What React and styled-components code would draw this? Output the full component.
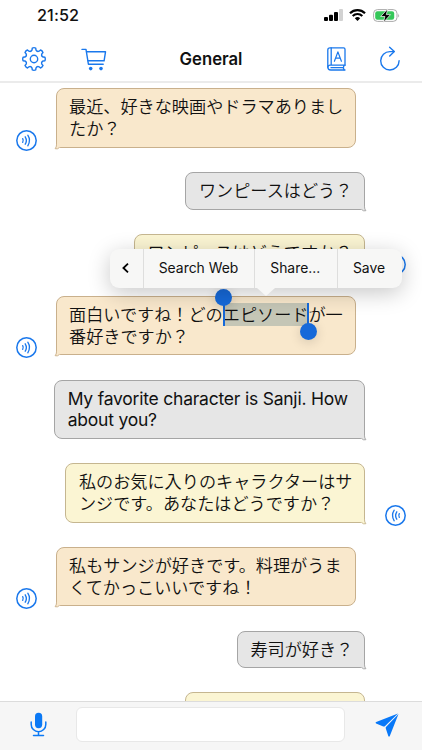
import React from "react";
import styled, { createGlobalStyle, css } from "styled-components";

const BLUE = "#1a78ec";

const GlobalStyle = createGlobalStyle`
  * { box-sizing: border-box; }
  body { margin: 0; background: #fff; font-family: Inter, "Noto Sans CJK JP", sans-serif; color: #111; }
  svg { display: block; overflow: visible; flex: none; }
`;

const Screen = styled.main`
  width: 422px;
  height: 750px;
  overflow: hidden;
  display: flex;
  flex-direction: column;
  background: #fff;
`;

const StatusBar = styled.div`
  height: 34px;
  flex: none;
  display: flex;
  align-items: flex-end;
  justify-content: space-between;
  padding: 0 22.5px 7px 37px;
`;

const Clock = styled.time`
  font-size: 16.2px;
  line-height: 22px;
  padding-bottom: 1px;
  font-weight: 550;
  letter-spacing: 0.1px;
`;

const StatusIcons = styled.div`
  display: flex;
  align-items: center;
  gap: 6.5px;
  height: 24px;
`;

const NavBar = styled.header`
  height: 49px;
  flex: none;
  display: grid;
  grid-template-columns: 1fr auto 1fr;
  align-items: center;
  padding: 2px 22px 0 22px;
  border-bottom: 2px solid #ebebeb;
`;

const NavGroup = styled.div`
  display: flex;
  align-items: center;
  gap: ${(p) => p.$gap}px;
  justify-content: ${(p) => (p.$end ? "flex-end" : "flex-start")};
`;

const Title = styled.h1`
  margin: 0;
  padding-top: 1px;
  font-size: 16.7px;
  line-height: 22px;
  font-weight: 560;
`;

const Chat = styled.section`
  flex: 1;
  min-height: 0;
  overflow: hidden;
  display: flex;
  flex-direction: column;
  gap: 24.2px;
  padding: 5.4px 16px 0;
`;

const Row = styled.div`
  flex: none;
  display: flex;
  align-items: flex-end;
  flex-direction: ${(p) => (p.$mine ? "row-reverse" : "row")};
  gap: ${(p) => (p.$mine ? 20 : 19)}px;
`;

const IconSlot = styled.div`
  width: 21px;
  height: 18px;
  flex: none;
  svg { ${(p) => p.$mine && css`transform: scaleX(-1);`} }
`;

const tones = {
  peach: ["#f9e8cc", "#c9b08c"],
  gray: ["#e6e6e6", "#a5a5a5"],
  lemon: ["#fbf5d3", "#c5b690"],
};

const Bubble = styled.div`
  position: relative;
  flex: none;
  width: ${(p) => p.$width}px;
  height: ${(p) => (p.$lines > 1 ? 59.5 : 37.7)}px;
  padding: ${(p) => (p.$latin ? 7 : 6)}px 0 0 ${(p) => (p.$mine ? 12.7 : 12)}px;
  border: 1px solid ${(p) => tones[p.$tone][1]};
  border-radius: 8px;
  ${(p) => (p.$mine ? "border-bottom-right-radius: 3px;" : "border-bottom-left-radius: 3px;")}
  background: ${(p) => tones[p.$tone][0]};
`;

const Line = styled.div`
  height: 21.8px;
  line-height: 21.8px;
  white-space: nowrap;
  font-weight: ${(p) => (p.$latin ? 400 : 350)};
  font-family: ${(p) => (p.$latin ? "Inter, sans-serif" : '"Noto Sans CJK JP", sans-serif')};
  font-size: ${(p) => (p.$latin ? 17.5 : 17.15)}px;
  letter-spacing: ${(p) => (p.$latin ? "-0.22px" : "0")};
`;

const Tail = styled.svg`
  position: absolute;
  bottom: -3px;
  ${(p) => (p.$mine ? "right: -2px;" : "left: -2px; transform: scaleX(-1);")}
`;

const Selected = styled.span`
  position: relative;
  z-index: 3;
  display: inline-block;
  height: 23px;
  line-height: 21.8px;
  vertical-align: top;
  background: rgba(96, 132, 140, 0.34);
`;

const Handle = styled.i`
  position: absolute;
  top: 0;
  width: 2px;
  height: 23px;
  background: #1669d9;
  ${(p) => (p.$start ? "left: 0;" : "right: -1px;")}
  &::after {
    content: "";
    position: absolute;
    left: -7.5px;
    ${(p) => (p.$start ? "top: -14px;" : "bottom: -14px;")}
    width: 17px;
    height: 17px;
    border-radius: 50%;
    background: #1669d9;
    box-shadow: 0 2px 12px rgba(0, 0, 0, 0.16);
  }
`;

const Menu = styled.div`
  position: absolute;
  z-index: 4;
  left: 109.5px;
  top: 248.5px;
  width: 292px;
  height: 39.5px;
  display: grid;
  grid-template-columns: 33.5px 111px 82.5px 1fr;
  border-radius: 9px;
  background: #f7f7f6;
  box-shadow: 0 5px 22px rgba(0, 0, 0, 0.22);
  &::after {
    content: "";
    position: absolute;
    left: 147.5px;
    top: 39px;
    border: 9px solid transparent;
    border-top: 8px solid #f7f7f6;
    border-bottom: 0;
  }
`;

const MenuItem = styled.button`
  display: flex;
  align-items: center;
  justify-content: center;
  padding: 0 1px 0 0;
  border: 0;
  border-left: ${(p) => (p.$first ? 0 : "1px solid #dededd")};
  background: none;
  color: #111;
  font: 400 13.9px/20px Inter, sans-serif;
`;

const Composer = styled.footer`
  height: 49px;
  flex: none;
  display: flex;
  align-items: flex-start;
  padding: 5px 23px 0 30px;
  border-top: 1px solid #dcdcdc;
  background: #f6f6f6;
`;

const Field = styled.input`
  width: 269px;
  height: 35px;
  margin-left: 29px;
  margin-right: auto;
  border: 1px solid #e8e8e8;
  border-radius: 6px;
  background: #fff;
  outline: 0;
`;

const MicSlot = styled.div`
  width: 17px;
  padding-top: 5px;
`;

const SendSlot = styled.div`
  padding-top: 6px;
`;

const Signal = () => (
  <svg width="19" height="12" viewBox="0 0 19 12">
    <rect x="0" y="8" width="4" height="4" rx="1" fill="#000" />
    <rect x="5" y="5.8" width="4" height="6.2" rx="1" fill="#000" />
    <rect x="10" y="3" width="4" height="9" rx="1" fill="#000" />
    <rect x="15" y="0" width="4" height="12" rx="1" fill="#d2d2d2" />
  </svg>
);

const Wifi = () => (
  <svg width="17" height="12" viewBox="0 0 17 12" fill="none" stroke="#000" strokeWidth="2.2">
    <path d="M1 4.2a10.7 10.7 0 0 1 15 0" />
    <path d="M3.7 7a6.8 6.8 0 0 1 9.6 0" />
    <path d="M8.5 12 5.8 9.3a3.9 3.9 0 0 1 5.4 0Z" fill="#000" stroke="none" />
  </svg>
);

const Battery = () => (
  <svg width="27" height="13" viewBox="0 0 27 13">
    <rect x=".6" y=".6" width="23.4" height="11.8" rx="3.8" fill="#fff" stroke="#aaa" strokeWidth="1" />
    <rect x="2.2" y="2.2" width="19" height="8.6" rx="2.2" fill="#35c759" />
    <path d="M25.2 4.5q1.7 2 0 4Z" fill="#aaa" />
    <path d="M14.8-.2 7.7 7.5h4.2l-1.5 5.9 7.1-7.8h-4.2Z" fill="#000" stroke="#fff" strokeWidth=".7" />
  </svg>
);

const gearPath = (() => {
  const parts = [];
  for (let i = 0; i < 8; i++) {
    const at = (deg, r) => {
      const a = ((i * 45 + deg - 90) * Math.PI) / 180;
      return `${(12 + r * Math.cos(a)).toFixed(2)} ${(12 + r * Math.sin(a)).toFixed(2)}`;
    };
    parts.push(`${i ? "L" : "M"}${at(-9, 11.1)}Q${at(0, 11.7)} ${at(9, 11.1)}L${at(12, 9.3)}Q${at(22.5, 7.6)} ${at(33, 9.3)}`);
  }
  return parts.join("") + "Z";
})();

const Gear = () => (
  <svg width="24" height="24" viewBox="0 0 24 24" fill="none" stroke={BLUE} strokeWidth="1.4" strokeLinejoin="round">
    <path d={gearPath} />
    <circle cx="12" cy="12" r="3.7" />
  </svg>
);

const Cart = () => (
  <svg width="26" height="24" viewBox="0 0 26 24" fill="none" stroke={BLUE} strokeWidth="1.4" strokeLinecap="round" strokeLinejoin="round">
    <path d="M1 2.4h4l2.4 14.8h14.8" />
    <path d="M5.6 4.8h18.9l-1.4 9H7" />
    <circle cx="9.7" cy="21.6" r="1.8" fill={BLUE} stroke="none" />
    <circle cx="20" cy="21.6" r="1.8" fill={BLUE} stroke="none" />
  </svg>
);

const Book = () => (
  <svg width="19" height="24" viewBox="0 0 19 24" fill="none" stroke={BLUE} strokeWidth="1.3" strokeLinejoin="round" strokeLinecap="round">
    <path d="M18 18.2V2.3Q18 .9 16.6.9H3Q.8.9.8 3v17q0 3 3 3H18" />
    <path d="M18 18.2H3.2q-2.3 0-2.3 2M4.2 1v17M17 18.4q-1.2 2.2 0 4.4M4 20.7h12" />
    <path d="m7.4 14.3 3.5-9.4 3.5 9.4M8.6 11.2h4.6" strokeWidth="1.2" />
  </svg>
);

const Refresh = () => (
  <svg width="20" height="24" viewBox="0 0 20 24" fill="none" stroke={BLUE} strokeWidth="1.4" strokeLinecap="round" strokeLinejoin="round">
    <path d="M19.1 13.8A9.2 9.2 0 1 1 10 4.6h4" />
    <path d="m9.6.2 4.7 4.4-4.6 4.5" />
  </svg>
);

const Speaker = () => (
  <svg width="21" height="21" viewBox="0 0 21 21" fill="none" stroke={BLUE} strokeWidth="1.3" strokeLinecap="round">
    <circle cx="10.5" cy="10.5" r="9.7" strokeWidth="1.5" />
    <path d="M6.7 8.6q1.1 1.9 0 3.8M9.2 6.8q2.3 3.7 0 7.4M11.8 5.2q3.4 5.3 0 10.6" />
  </svg>
);

const Mic = () => (
  <svg width="17" height="25" viewBox="0 0 17 25" fill="none" stroke="#0b79f5" strokeWidth="1.5" strokeLinecap="round">
    <rect x="5" y=".8" width="7.2" height="15.4" rx="3.6" fill="#0b79f5" stroke="none" />
    <path d="M1.2 10v2.4a7.3 7.3 0 0 0 14.6 0V10M8.5 19.7v3.8M3.5 23.5h10" />
  </svg>
);

const Send = () => (
  <svg width="24" height="24" viewBox="0 0 24 24" fill="#0878f8">
    <path d="M23 .6 1.2 9.1q-1.4.7-.1 1.5l7.2 2.8q1 .3 1.8-.5Z" />
    <path d="M23.5 1.1 11.2 13.8q-.8.8-.4 1.8l2.5 7.4q.7 1.5 1.5 0Z" />
  </svg>
);

const BubbleTail = ({ mine, tone }) => (
  <Tail $mine={mine} width="7" height="7" viewBox="0 0 7 7">
    <path d="M1.5 4V1H5.5q0 3 1.4 4.7-2.2 1-4.2-1Z" fill={tones[tone][0]} />
    <path d="M5.5 0v1.8q0 2.4 1.4 3.9-2.4.9-4.3-1.2" fill="none" stroke={tones[tone][1]} strokeWidth=".9" />
  </Tail>
);

const messages = [
  { tone: "peach", icon: true, lines: ["最近、好きな映画やドラマありまし", "たか？"] },
  { tone: "gray", mine: true, lines: ["ワンピースはどう？"] },
  { tone: "lemon", mine: true, icon: true, lines: ["ワンピースはどうですか？"] },
  { tone: "peach", icon: true, width: 300, lines: [["面白いですね！どの", "エピソード", "が一"], "番好きですか？"] },
  { tone: "gray", mine: true, latin: true, width: 311, lines: ["My favorite character is Sanji. How", "about you?"] },
  { tone: "lemon", mine: true, icon: true, lines: ["私のお気に入りのキャラクターはサ", "ンジです。あなたはどうですか？"] },
  { tone: "peach", icon: true, lines: ["私もサンジが好きです。料理がうま", "くてかっこいいですね！"] },
  { tone: "gray", mine: true, lines: ["寿司が好き？"] },
  { tone: "lemon", mine: true, width: 179.8, lines: [] },
];

function SelectedLine({ parts: [before, picked, after] }) {
  return (
    <>
      {before}
      <Selected>
        {picked}
        <Handle $start />
        <Handle />
      </Selected>
      {after}
    </>
  );
}

function Message({ tone, mine, icon, latin, width, lines }) {
  const boxWidth = width || lines[0].length * 17.15 + 25.4;
  return (
    <Row $mine={mine}>
      <IconSlot $mine={mine}>{icon && <Speaker />}</IconSlot>
      <Bubble $tone={tone} $mine={mine} $latin={latin} $lines={lines.length} $width={boxWidth}>
        {lines.map((line, i) => (
          <Line key={i} $latin={latin}>
            {Array.isArray(line) ? <SelectedLine parts={line} /> : line}
          </Line>
        ))}
        <BubbleTail mine={mine} tone={tone} />
      </Bubble>
    </Row>
  );
}

export default function App() {
  return (
    <>
      <GlobalStyle />
      <Screen>
        <StatusBar>
          <Clock>21:52</Clock>
          <StatusIcons><Signal /><Wifi /><Battery /></StatusIcons>
        </StatusBar>
        <NavBar>
          <NavGroup $gap={35}><Gear /><Cart /></NavGroup>
          <Title>General</Title>
          <NavGroup $gap={34} $end><Book /><Refresh /></NavGroup>
        </NavBar>
        <Chat>
          {messages.map((m, i) => <Message key={i} {...m} />)}
        </Chat>
        <Composer>
          <MicSlot><Mic /></MicSlot>
          <Field aria-label="Message" />
          <SendSlot><Send /></SendSlot>
        </Composer>
      </Screen>
      <Menu>
        <MenuItem $first aria-label="Back">
          <svg width="7" height="10" viewBox="0 0 7 10" fill="none" stroke="#000" strokeWidth="1.8"><path d="M6 .6 1.4 5 6 9.4" /></svg>
        </MenuItem>
        <MenuItem>Search Web</MenuItem>
        <MenuItem>Share...</MenuItem>
        <MenuItem>Save</MenuItem>
      </Menu>
    </>
  );
}
